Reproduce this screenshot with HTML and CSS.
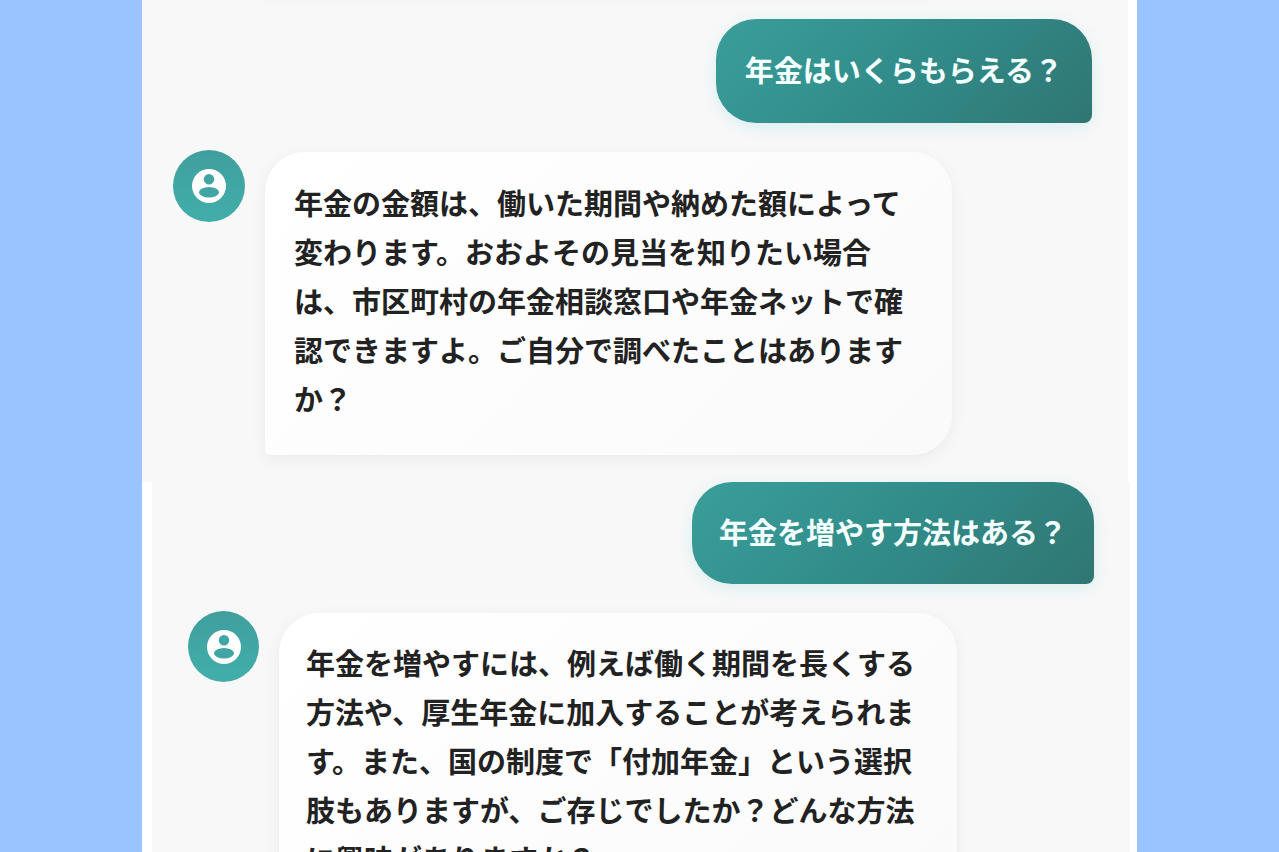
FILE: index.html
```html
<!DOCTYPE html>
<html lang="ja">
<head>
    <meta charset="UTF-8">
    <meta name="viewport" content="width=device-width, initial-scale=1.0">
    <title>年金チャット</title>
    <link rel="stylesheet" href="styles.css">
</head>
<body>
    <main class="chat">
        <section class="panel panel-first">
            <div class="previous"></div>
            <div class="message user">
                <p class="bubble">年金はいくらもらえる？</p>
            </div>
            <div class="message bot">
                <div class="avatar">
                    <svg viewBox="0 0 34 34" aria-hidden="true">
                        <circle cx="17" cy="17" r="17" fill="#fff"/>
                        <circle cx="17" cy="10.3" r="5.2" fill="#40a6a4"/>
                        <ellipse cx="17" cy="23.2" rx="10" ry="5.2" fill="#40a6a4"/>
                    </svg>
                </div>
                <p class="bubble">年金の金額は、働いた期間や納めた額によって変わります。おおよその見当を知りたい場合は、市区町村の年金相談窓口や年金ネットで確認できますよ。ご自分で調べたことはありますか？</p>
            </div>
        </section>

        <section class="panel panel-second">
            <div class="message user">
                <p class="bubble">年金を増やす方法はある？</p>
            </div>
            <div class="message bot">
                <div class="avatar">
                    <svg viewBox="0 0 34 34" aria-hidden="true">
                        <circle cx="17" cy="17" r="17" fill="#fff"/>
                        <circle cx="17" cy="10.3" r="5.2" fill="#40a6a4"/>
                        <ellipse cx="17" cy="23.2" rx="10" ry="5.2" fill="#40a6a4"/>
                    </svg>
                </div>
                <p class="bubble">年金を増やすには、例えば働く期間を長くする方法や、厚生年金に加入することが考えられます。また、国の制度で「付加年金」という選択肢もありますが、ご存じでしたか？どんな方法に興味がありますか？</p>
            </div>
        </section>
    </main>
</body>
</html>
```
FILE: styles.css
```css
* { box-sizing: border-box; }

body {
    margin: 0;
    background: #99c4ff;
    color: #222;
    font-family: "Noto Sans CJK JP", sans-serif;
    font-size: 29px;
    font-weight: 600;
    line-height: 49px;
}

.chat {
    max-width: 995px;
    height: 100vh;
    margin: 0 auto;
    overflow: hidden;
    background: #fff;
}

.panel {
    display: flex;
    flex-direction: column;
    gap: 27px;
    background: #f8f8f8;
}
.panel-first {
    margin-right: 9px;
    padding: 0 36px 27px 31px;
}
.panel-second {
    margin: 0 7px 0 10px;
    padding: 0 36px 27px 36px;
}

/* lower edge of the message scrolled out above */
.previous {
    width: 687px;
    height: 40px;
    margin: -48px 0 0 92px;
    border-radius: 0 0 40px 5px;
    box-shadow: 0 4px 16px rgba(0,0,0,0.06);
}

.message { display: flex; }
.user { justify-content: flex-end; }
.bot { gap: 20px; }

.bubble {
    margin: 0;
    padding: 25px 27px 28px;
    border-radius: 40px;
}
.user .bubble {
    border-bottom-right-radius: 8px;
    background: linear-gradient(135deg, #3a9e9b 0%, #318c89 50%, #307673 100%);
    color: #f4ffff;
    box-shadow: 0 4px 16px rgba(50,180,190,0.15);
}
.bot .bubble {
    flex: 0 1 678px;
    margin-top: 2px;
    border-bottom-left-radius: 5px;
    background: linear-gradient(135deg, #fff, #fafafa);
    box-shadow: 0 4px 16px rgba(0,0,0,0.06);
}
.panel-first .bubble {
    padding: 26px 29px 29px;
}
.panel-first .bot .bubble {
    flex-basis: 687px;
    padding-bottom: 32px;
}

.avatar {
    display: flex;
    flex: none;
    align-items: center;
    justify-content: center;
    width: 71px;
    height: 71px;
    border-radius: 50%;
    background: linear-gradient(180deg, #409f9e, #41aeaa);
}
.panel-first .avatar {
    width: 72px;
    height: 72px;
}
.avatar svg {
    width: 34px;
    height: 34px;
}
```
